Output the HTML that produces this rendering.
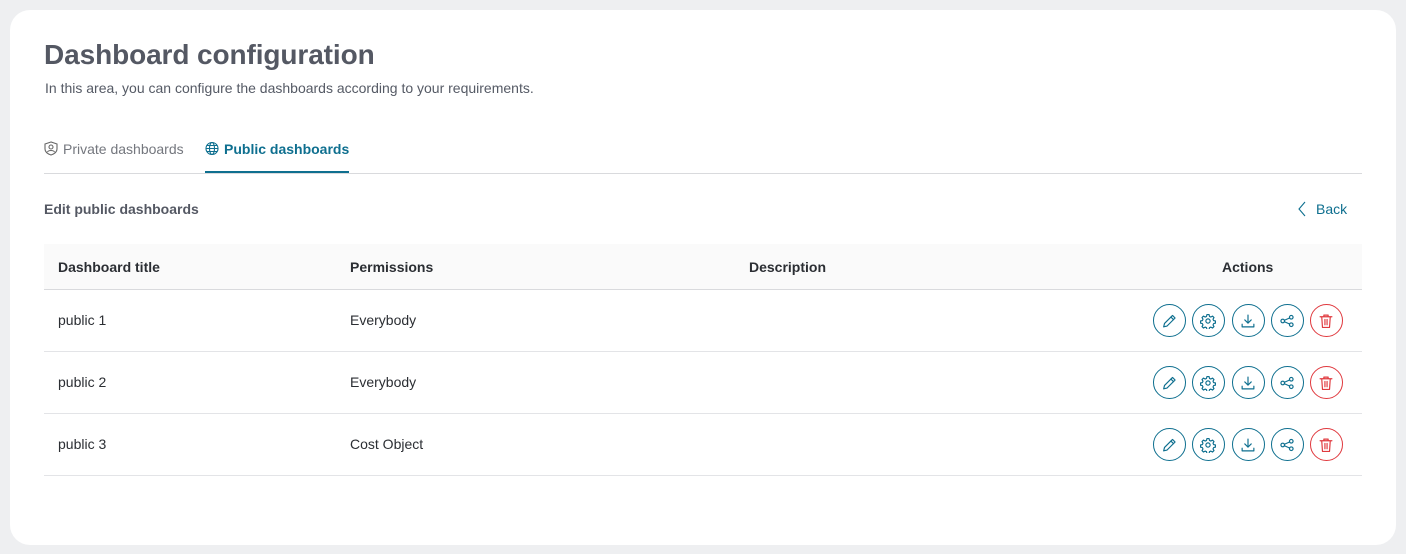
<!DOCTYPE html>
<html><head><meta charset="utf-8"><style>
*{box-sizing:border-box;margin:0;padding:0}
body{width:1406px;height:554px;background:#eeeff1;font-family:"Liberation Sans",sans-serif;position:relative;overflow:hidden}
.card{position:absolute;left:10px;top:10px;width:1386px;height:535px;background:#fff;border-radius:20px}
.abs{position:absolute}
h1{position:absolute;left:34px;top:29px;font-size:28px;font-weight:bold;color:#545863;letter-spacing:-0.1px}
.sub{left:35px;top:70px;font-size:14px;color:#555a65}
.tab{top:131px;font-size:14px}
.line{left:34px;top:163px;width:1318px;height:1px;background:#d9dadd}
.act{left:195px;top:161px;width:144px;height:2px;background:#0e6f8f}
.row{position:absolute;left:34px;width:1318px;border-bottom:1px solid #e3e4e7}
.btn{position:absolute;width:33px;height:33px;border-radius:50%;border:1.2px solid #0e6f8f;display:flex;align-items:center;justify-content:center}
.btn.r{border-color:#e0393e}
.btn svg{width:16px;height:16px;fill:none;stroke:#0e6f8f;stroke-width:1.1;stroke-linecap:round;stroke-linejoin:round}
.btn.r svg{stroke:#e0393e}
</style></head><body><div class="card">
<h1>Dashboard configuration</h1>
<div class="abs sub">In this area, you can configure the dashboards according to your requirements.</div>
<div class="abs tab" style="left:34px;color:#74777e"><svg width="14" height="15" viewBox="0 0 14 15" style="vertical-align:-2px;margin-right:5px" fill="none" stroke="#666" stroke-width="1.1"><path d="M7 1L1 3v5c0 3 3 5 6 6 3-1 6-3 6-6V3z"/><circle cx="7" cy="6" r="2"/><path d="M3.5 11c1-2 6-2 7 0"/></svg>Private dashboards</div>
<div class="abs tab" style="left:195px;color:#0e6f8f;font-weight:bold"><svg width="14" height="15" viewBox="0 0 14 14" style="vertical-align:-2px;margin-right:5px" fill="none" stroke="#0e6f8f" stroke-width="1.1"><circle cx="7" cy="7" r="6"/><ellipse cx="7" cy="7" rx="2.5" ry="6"/><path d="M1 7h12M2 4h10M2 10h10"/></svg>Public dashboards</div>
<div class="abs line"></div><div class="abs act"></div>
<div class="abs" style="left:34px;top:191px;font-size:14px;font-weight:bold;color:#545863">Edit public dashboards</div>
<div class="abs" style="left:1287px;top:191px;font-size:14px;color:#0e6f8f"><svg width="10" height="16" viewBox="0 0 10 16" style="vertical-align:-3px;margin-right:9px" fill="none" stroke="#0e6f8f" stroke-width="1.1"><path d="M8 1L2 8l6 7"/></svg>Back</div>
<div class="row" style="top:234px;height:46px;background:#fafafa;border-bottom:1px solid #d9dadd"></div>
<div class="abs" style="top:249px;left:48px;font-size:14px;font-weight:bold;color:#2b2e33">Dashboard title</div>
<div class="abs" style="top:249px;left:340px;font-size:14px;font-weight:bold;color:#2b2e33">Permissions</div>
<div class="abs" style="top:249px;left:739px;font-size:14px;font-weight:bold;color:#2b2e33">Description</div>
<div class="abs" style="top:249px;left:1212px;font-size:14px;font-weight:bold;color:#2b2e33">Actions</div>
<div id="rows"></div>
</div>
<script>
var data=[["public 1","Everybody"],["public 2","Everybody"],["public 3","Cost Object"]];
var icons=['<path d="M2.5 13l.8-3.2 7.5-7.5 2.4 2.4-7.5 7.5z"/><path d="M9.3 3.8l2.4 2.4"/>',
'<circle cx="7.5" cy="7.5" r="2"/><path d="M6.5 1.5h2l.4 1.7 1.3.6 1.5-.9 1.4 1.4-.9 1.5.6 1.3 1.7.4v2l-1.7.4-.6 1.3.9 1.5-1.4 1.4-1.5-.9-1.3.6-.4 1.7h-2l-.4-1.7-1.3-.6-1.5.9-1.4-1.4.9-1.5-.6-1.3-1.7-.4v-2l1.7-.4.6-1.3-.9-1.5 1.4-1.4 1.5.9 1.3-.6z"/>',
'<path d="M7.5 2v7.5M4.5 6.5l3 3 3-3M2 10.5v2.5h11v-2.5"/>',
'<circle cx="3.5" cy="7.5" r="1.7"/><circle cx="11.5" cy="4" r="1.7"/><circle cx="11.5" cy="11" r="1.7"/><path d="M5.1 6.8l4.8-2.1M5.1 8.2l4.8 2.1"/>',
'<path d="M2 3.5h11M5.5 3.5V2h4v1.5M3.5 3.5l.7 10h6.6l.7-10M6.5 6v5M8.5 6v5"/>'];
var cx=[1159,1198,1238,1277,1316],h='';
data.forEach(function(d,i){var t=280+i*62;
h+='<div class="row" style="top:'+t+'px;height:62px"></div>';
h+='<div class="abs" style="top:'+(t+22)+'px;left:48px;font-size:14px;color:#2b2e33">'+d[0]+'</div>';
h+='<div class="abs" style="top:'+(t+22)+'px;left:340px;font-size:14px;color:#2b2e33">'+d[1]+'</div>';
cx.forEach(function(x,j){h+='<div class="btn'+(j==4?' r':'')+'" style="left:'+(x-16.5)+'px;top:'+(t+14)+'px"><svg viewBox="0 0 15 15">'+icons[j]+'</svg></div>';});
});
document.getElementById('rows').outerHTML=h;
</script>
</body></html>
